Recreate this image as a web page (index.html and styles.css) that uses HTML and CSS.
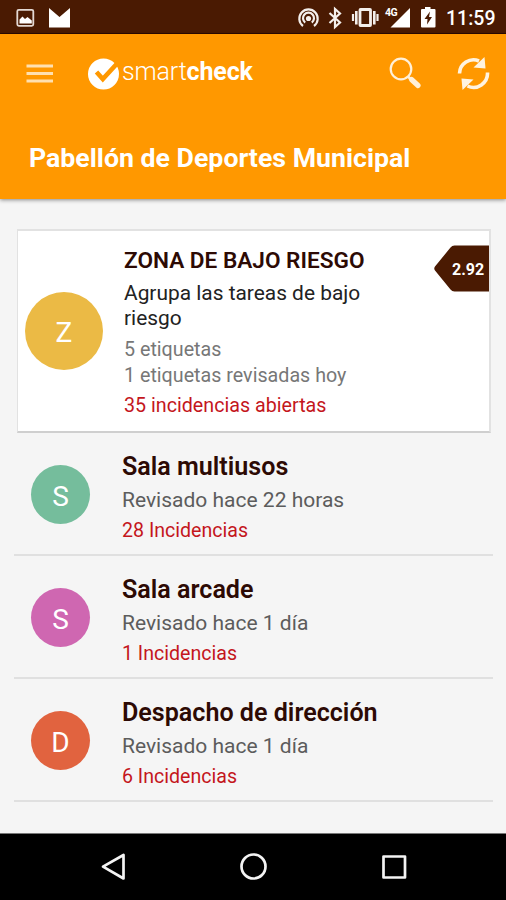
FILE: index.html
```html
<!DOCTYPE html>
<html lang="es">
<head>
<meta charset="utf-8">
<title>Smartcheck</title>
<link rel="stylesheet" href="styles.css">
</head>
<body>
<div class="screen">
  <div class="status">
    <svg class="status-left" width="80" height="33" viewBox="0 0 80 33">
      <rect x="17.3" y="9.8" width="16" height="16" rx="1.5" fill="none" stroke="#e4d9d4" stroke-width="1.8"/>
      <path d="M19.500 23.500v-4l3-3 2.500 2.500 2.500-2 4.300 3.500v3z" fill="#fff"/>
      <path d="M49 8l10.500 9L70 8v19.500H49z" fill="#fff"/>
    </svg>
    <svg class="status-icons" width="142" height="33" viewBox="294 0 142 33">
      <g fill="none" stroke="#f4efec" stroke-width="2.200">
        <path d="M303 26a9.200 9.200 0 1 1 11 0"/>
        <path d="M305.200 22.600a5.500 5.500 0 1 1 6.600 0"/>
        <path d="M329.500 13l10.500 9.500-5 4.500V9l5 4.500-10.500 9.500"/>
        <rect x="360" y="9.500" width="10.500" height="16" rx=".5" stroke-width="2.800"/>
        <path d="M356.300 11v13.500M374.300 11v13.500" stroke-width="2.600"/>
        <path d="M353 14v7M377.500 14v7"/>
      </g>
      <circle cx="308.500" cy="18.500" r="2.600" fill="#f4efec"/>
      <path d="M410 8v19.500h-19.500z" fill="#fff"/>
      <path d="M425 9V7h5.500v2h4q1 0 1 1v16.500q0 1-1 1h-12.500q-1 0-1-1V10q0-1 1-1z" fill="#fff"/>
      <path d="M430 11.500l-5.500 7.500h3l-.5 5.500 5-7.500h-3z" fill="#4a1a02"/>
      <text class="net" x="385" y="16">4G</text>
    </svg>
    <span class="clock">11:59</span>
  </div>
  <header class="appbar">
    <div class="toolbar">
      <svg class="menu" width="28" height="20" viewBox="0 0 28 20"><path d="M.5 2h26.500M.5 9.500h26.500M.5 17h26.500" stroke="#ffe0b0" stroke-width="3"/></svg>
      <div class="brand">
        <svg width="32" height="32" viewBox="0 0 32 32">
          <circle cx="15.500" cy="16" r="15.500" fill="#fff"/>
          <path d="M8.500 14l6.300 7L30 4.500" fill="none" stroke="#ff9800" stroke-width="4.600"/>
        </svg>
        <span class="logo"><span class="thin">smart</span><b>check</b></span>
      </div>
      <svg class="actions" width="102" height="36" viewBox="388 55 102 36">
        <circle cx="401" cy="69" r="10.300" fill="none" stroke="#fff0d8" stroke-width="2.200"/>
        <path d="M408 76.500l3.500 3.500" stroke="#fff0d8" stroke-width="2.500"/>
        <path d="M411.500 79.500l6.500 6" stroke="#fff0d8" stroke-width="5.200" stroke-linecap="round"/>
        <path d="M459.500 73.500A14 14 0 0 1 479 61" fill="none" stroke="#fff3e0" stroke-width="3.600"/>
        <path d="M484.500 57l1 11.500-12-1z" fill="#fff3e0"/>
        <path d="M487.500 72.500A14 14 0 0 1 467.500 86" fill="none" stroke="#fff3e0" stroke-width="3.600"/>
        <path d="M462.500 90l-1-11.500 12 1z" fill="#fff3e0"/>
      </svg>
    </div>
    <h1>Pabellón de Deportes Municipal</h1>
  </header>
  <main>
    <section class="card">
      <div class="avatar zone">Z</div>
      <div class="info">
        <h2>ZONA DE BAJO RIESGO</h2>
        <p class="desc">Agrupa las tareas de bajo<br>riesgo</p>
        <p class="meta">5 etiquetas</p>
        <p class="meta">1 etiquetas revisadas hoy</p>
        <p class="alert">35 incidencias abiertas</p>
      </div>
      <div class="tag">
        <svg width="55" height="47" viewBox="0 0 55 47"><path d="M1 21.500L16.500 2.500Q18 .5 20.500.5H55v46H20.500Q18 46.500 16.500 44.500L1 25.500Q-.5 23.500 1 21.500z" fill="#4a1a02"/></svg>
        <span>2.92</span>
      </div>
    </section>
    <article class="row">
      <div class="avatar green">S</div>
      <div><h3>Sala multiusos</h3><p class="ago">Revisado hace 22 horas</p><p class="inc">28 Incidencias</p></div>
    </article>
    <article class="row">
      <div class="avatar pink">S</div>
      <div><h3>Sala arcade</h3><p class="ago">Revisado hace 1 día</p><p class="inc">1 Incidencias</p></div>
    </article>
    <article class="row">
      <div class="avatar red">D</div>
      <div><h3>Despacho de dirección</h3><p class="ago">Revisado hace 1 día</p><p class="inc">6 Incidencias</p></div>
    </article>
  </main>
  <nav>
    <svg width="506" height="66" viewBox="0 834 506 66" fill="none" stroke="#f4f4f4" stroke-width="2.700" stroke-linejoin="round">
      <path d="M103 866.700L123.500 855v23.500z"/>
      <circle cx="253.500" cy="866.500" r="12"/>
      <rect x="383.500" y="856.500" width="21.500" height="21"/>
    </svg>
  </nav>
</div>
</body>
</html>
```
FILE: styles.css
```css
* { box-sizing: border-box; }
body { margin: 0; font-family: Roboto, "Liberation Sans", sans-serif; }
h1, h2, h3, p { margin: 0; white-space: nowrap; }
.screen { width: 506px; height: 900px; display: flex; flex-direction: column; background: #f5f5f5; overflow: hidden; }
.status { height: 34px; flex: none; display: flex; background: #4a1a02; border-bottom: 1px solid #2c0a00; }
.status-icons { margin-left: 214px; }
.net { font-size: 10.5px; font-weight: 700; fill: #fff; letter-spacing: -.5px; }
.clock { margin-left: 10px; font-size: 19.500px; font-weight: 500; line-height: 37px; color: #fff; }
.appbar { height: 165px; flex: none; background: #ff9800; box-shadow: 0 1px 4px rgba(0,0,0,.45); position: relative; }
.toolbar { height: 78px; display: flex; align-items: center; padding: 0 16px 0 26px; }
.menu { margin-top: 2px; }
.brand { display: flex; align-items: center; margin: 2px 0 0 34px; gap: 2px; }
.logo { color: #fff; font-size: 25px; line-height: 30px; margin-top: -4px; letter-spacing: -.15px; }
.thin { font-weight: 300; }
.actions { margin-left: auto; }
h1 { color: #fff; font-size: 26.700px; font-weight: 700; line-height: 34px; margin: 29px 0 0 29px; }
main { flex: 1; padding: 30px 13px 0 14px; }
.card { height: 204px; margin: 0 2px 0 3px; background: #fff; border: 2px solid #e2e2e2; border-left-width: 1px; border-bottom-color: #cfcfcf; display: flex; }
.avatar { border-radius: 50%; width: 59px; height: 59px; color: #fff; display: flex; align-items: center; justify-content: center; flex: none; font-size: 28px; padding-top: 3px; }
.zone { width: 78px; height: 78px; margin: 61px 21px 0 7px; background: #ebba45; padding-top: 2px; }
.info { padding-top: 15px; flex: 1; }
h2 { font-size: 22.600px; font-weight: 600; line-height: 30px; color: #2d0a04; }
.desc { font-size: 20.900px; line-height: 25px; margin-top: 5px; color: #222; }
.meta { font-size: 19.700px; line-height: 26px; color: #777; }
.desc + .meta { margin-top: 6px; }
.alert { font-size: 19.700px; line-height: 26px; margin-top: 4px; color: #c4161c; }
.tag { width: 55px; height: 47px; margin-top: 14px; display: grid; }
.tag svg, .tag span { grid-area: 1 / 1; }
.tag span { color: #fff; font-size: 16px; font-weight: 700; line-height: 49px; padding-left: 18px; z-index: 1; }
.row { height: 123px; display: flex; border-bottom: 2px solid #e0e0e0; padding: 19px 0 0 17px; }
.card + .row { padding-top: 19px; }
.row .avatar { margin: 13px 32px 0 0; }
.green { background: #75bd9c; }
.pink { background: #cf67b1; }
.red { background: #e1633f; }
h3 { font-size: 25.100px; font-weight: 600; line-height: 30px; color: #2d0a04; }
.ago { font-size: 21px; line-height: 28px; margin-top: 4px; color: #5c5c5c; }
.inc { font-size: 19.600px; line-height: 28px; margin-top: 3px; color: #c4161c; }
nav { height: 67px; flex: none; background: #000; border-top: 1px solid #777; }
```
